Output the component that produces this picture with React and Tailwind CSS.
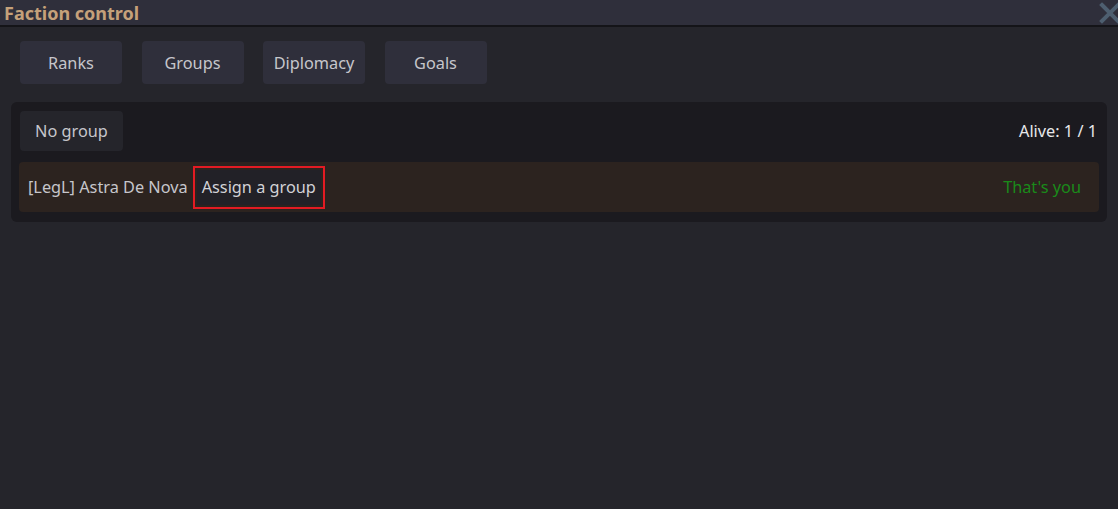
import { useState } from 'react'

const tabs = ['Ranks', 'Groups', 'Diplomacy', 'Goals']

function CloseIcon() {
  return (
    <svg width="22" height="22" viewBox="0 0 22 22" className="shrink-0">
      <path d="M3 3 L19 19 M19 3 L3 19" stroke="#4e5f70" strokeWidth="4" strokeLinecap="square" />
    </svg>
  )
}

export default function App() {
  const [tab, setTab] = useState('Groups')

  return (
    <div
      className="flex h-[509px] w-[1118px] flex-col overflow-hidden bg-[#25252b] text-[#c9c9cd]"
      style={{ fontFamily: '"Noto Sans", "DejaVu Sans", sans-serif' }}
    >
      {/* title bar */}
      <div className="flex h-[25px] items-center justify-between bg-[#2f2f3b] pl-[4px] pr-0">
        <span className="text-[18px] font-bold leading-none text-[#c5a17a]">Faction control</span>
        <div className="-mr-[3px] mt-[1px]">
          <CloseIcon />
        </div>
      </div>
      <div className="h-[2px] bg-[#141418]" />

      {/* tabs */}
      <div className="flex gap-[19.5px] pl-[20px] pt-[14px]">
        {tabs.map((t) => (
          <button
            key={t}
            onClick={() => setTab(t)}
            className="flex h-[43px] w-[102px] items-center justify-center rounded-[4px] bg-[#2f2f3b] pt-[1px] text-[16.3px] text-[#c6c6cb]"
          >
            {t}
          </button>
        ))}
      </div>

      {/* members panel */}
      <div className="mx-[11px] mt-[18px] flex flex-col rounded-[6px] bg-[#1b1a1f] px-[8px] pb-[10px] pt-[9px]">
        <div className="flex items-center justify-between">
          <div className="ml-[1px] flex h-[40px] w-[103px] items-center justify-center rounded-[4px] bg-[#25252b] text-[16.3px] text-[#c6c6cb]">
            No group
          </div>
          <span className="mr-[2px] text-[16.3px] text-[#e8e8ea]">Alive: 1 / 1</span>
        </div>
        <div className="mt-[11px] flex h-[50px] items-center justify-between rounded-[4px] bg-[#2c231f] pl-[9px] pr-[18px]">
          <div className="flex items-center">
            <span className="text-[16.3px] text-[#c6c6cb]">[LegL] Astra De Nova</span>
            <div className="ml-[5px] flex h-[43px] items-center border-[2px] border-[#e31b23] p-[2px]">
              <div className="flex h-full items-center bg-[#222127] px-[5px] text-[16.3px] text-[#d2d2d6]">
                Assign a group
              </div>
            </div>
          </div>
          <span className="text-[16.3px] text-[#1a8a1a]">That's you</span>
        </div>
      </div>
    </div>
  )
}
